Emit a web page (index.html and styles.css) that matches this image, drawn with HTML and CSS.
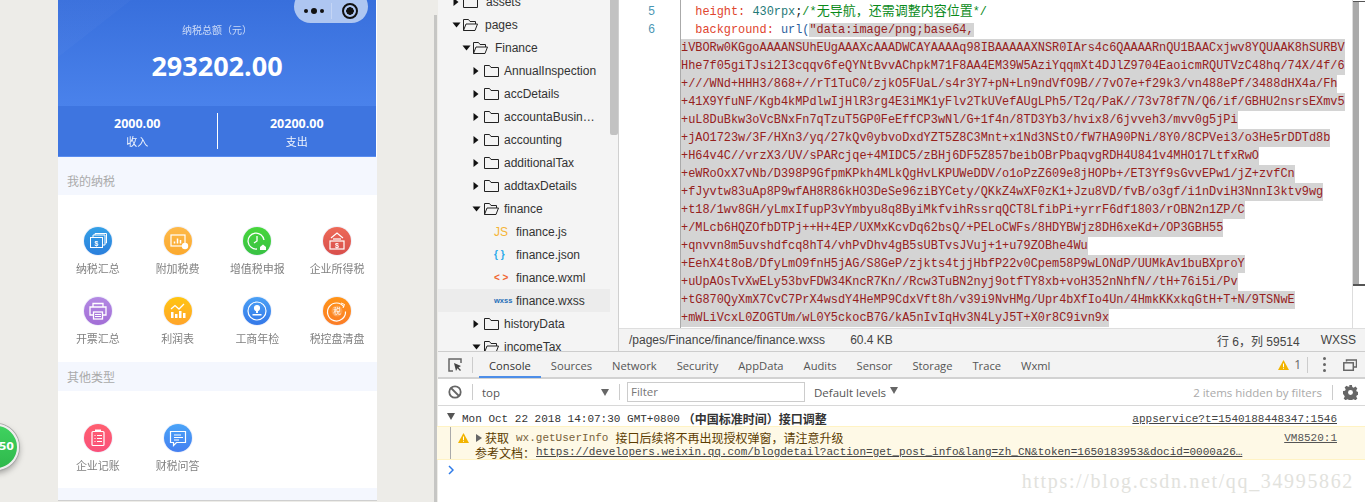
FILE: index.html
```html
<!DOCTYPE html>
<html lang="zh">
<head>
<meta charset="utf-8">
<title>finance.wxss</title>
<link rel="stylesheet" href="styles.css">
</head>
<body>
<svg class="sprite" aria-hidden="true">
  <symbol id="folder" viewBox="0 0 15 12"><path d="M.5 11.5V.5h5l1.5 2h7.5v9z" fill="none" stroke="#222"/></symbol>
  <symbol id="folder-open" viewBox="0 0 15 12"><path d="M.5 11.5V.5h5l1.5 2h5.5v2.5M.5 11.5l2.5-6.5h11.5l-2.5 6.5z" fill="none" stroke="#222"/></symbol>
  <symbol id="arrow-r" viewBox="0 0 8 10"><path d="M1.5 1l5 4-5 4z" fill="#111"/></symbol>
  <symbol id="arrow-d" viewBox="0 0 10 8"><path d="M.5 1.5h8l-4 5z" fill="#111"/></symbol>
  <symbol id="warn" viewBox="0 0 11 10"><path d="M5.5 0L11 10H0z" fill="#f2b400"/><path d="M5 3.5h1V7H5zM5 7.8h1v1H5z" fill="#fff"/></symbol>
</svg>
<div class="app">
  <section class="sim">
    <div class="phone">
      <div class="capsule">
        <span class="cap-dots"><i></i><i class="big"></i><i></i></span>
        <span class="cap-line"></span>
        <span class="cap-target"></span>
      </div>
      <header class="hero">
        <p class="hero-label">纳税总额（元）</p>
        <p class="hero-num">293202.00</p>
      </header>
      <div class="stats">
        <div class="stat"><b>2000.00</b><span>收入</span></div>
        <div class="stat stat-r"><b>20200.00</b><span>支出</span></div>
      </div>
      <h2 class="sec sec-a">我的纳税</h2>
      <div class="grid grid-a">
        <div class="cell"><span class="ico i1"><svg viewBox="0 0 28 28" fill="none" stroke="#fff" stroke-width="1"><rect x="6.5" y="10.5" width="12" height="10"/><path d="M9 10V8h12v10h-2M11 8V6.5h11.500v9.500h-1"/><text x="12.500" y="18.500" class="glyph" text-anchor="middle">$</text></svg></span><span class="lbl">纳税汇总</span></div>
        <div class="cell"><span class="ico i2"><svg viewBox="0 0 28 28" fill="none" stroke="#fff" stroke-width="1.200"><rect x="7" y="8" width="14" height="11"/><path d="M10.500 16.500v-2M13.500 16.500v-5M16.500 16.500v-3.500" stroke-width="1.500"/><circle cx="21" cy="19" r="3.200" fill="#fff" stroke="none"/></svg></span><span class="lbl">附加税费</span></div>
        <div class="cell"><span class="ico i3"><svg viewBox="0 0 28 28" fill="none" stroke="#fff" stroke-width="1.300"><path d="M21 13a8 8 0 1 0-7 9"/><path d="M14 9v5l-3 2"/><path d="M17 20l3-2.500 3 2.500v3h-6z" fill="#fff" stroke="none"/></svg></span><span class="lbl">增值税申报</span></div>
        <div class="cell"><span class="ico i4"><svg viewBox="0 0 28 28" fill="none" stroke="#fff" stroke-width="1.200"><path d="M8 11l6-5 6 5"/><path d="M10 12h8"/><rect x="7" y="14" width="14" height="8"/><text x="14" y="20.800" class="glyph" text-anchor="middle">$</text></svg></span><span class="lbl">企业所得税</span></div>
        <div class="cell"><span class="ico i5"><svg viewBox="0 0 28 28" fill="none" stroke="#fff" stroke-width="1.300"><path d="M9 10V6.500h10V10"/><path d="M9 18H6v-8h16v8h-3"/><rect x="9.500" y="15" width="9" height="7"/><path d="M11 17.500h6M11 19.500h6" stroke-width="1"/></svg></span><span class="lbl">开票汇总</span></div>
        <div class="cell"><span class="ico i6"><svg viewBox="0 0 28 28"><path d="M7 21v-6h2.500v6zM11 21v-4h2.500v4zM15 21v-7h2.500v7zM19 21v-5h2.500v5z" fill="#fff"/><path d="M7 12l4-3.500 4 3.500 5-5" fill="none" stroke="#fff" stroke-width="1.300"/></svg></span><span class="lbl">利润表</span></div>
        <div class="cell"><span class="ico i7"><svg viewBox="0 0 28 28" fill="none" stroke="#fff" stroke-width="1.200"><circle cx="14" cy="14" r="9"/><circle cx="14" cy="11" r="2.500" fill="#fff"/><path d="M13 13h2v3h-2zM9.500 17h9v1.500h-9z" fill="#fff" stroke="none"/></svg></span><span class="lbl">工商年检</span></div>
        <div class="cell"><span class="ico i8"><svg viewBox="0 0 28 28" fill="none" stroke="#fff" stroke-width="1.200"><path d="M21 10a9 9 0 1 0 1.500 4.500"/><path d="M18 6l3.500 1.500-1.500 3.500" stroke-width="1"/><circle cx="14" cy="14" r="5.500" stroke="none" fill="#ffffff30"/><text x="14" y="17" class="glyph-cjk" text-anchor="middle">税</text></svg></span><span class="lbl">税控盘清盘</span></div>
      </div>
      <h2 class="sec sec-b">其他类型</h2>
      <div class="grid grid-b">
        <div class="cell"><span class="ico i9"><svg viewBox="0 0 28 28" fill="none" stroke="#fff" stroke-width="1.200"><rect x="8" y="7.500" width="12" height="14" rx="1"/><path d="M11 6.500h6" stroke-width="2"/><path d="M10.500 11.500h1M13 11.500h5M10.500 14.500h1M13 14.500h5M10.500 17.500h1M13 17.500h5"/></svg></span><span class="lbl">企业记账</span></div>
        <div class="cell"><span class="ico i10"><svg viewBox="0 0 28 28" fill="none" stroke="#fff" stroke-width="1.200"><path d="M6.500 7.500h15v11h-9l-3 3v-3h-3z"/><path d="M10 11h7M10 13.500h9M10 16h5"/></svg></span><span class="lbl">财税问答</span></div>
      </div>
      <div class="phone-foot"></div>
    </div>
    <div class="sim-scroll"></div>
  </section>

  <main class="work">
    <div class="top">
      <nav class="tree">
        <div class="tree-scroll"></div>
        <div class="rows">
        <div class="row d1"><svg class="tw-r"><use href="#arrow-r"/></svg><svg class="fo"><use href="#folder"/></svg><span>assets</span></div>
        <div class="row d1"><svg class="tw-d"><use href="#arrow-d"/></svg><svg class="fo"><use href="#folder-open"/></svg><span>pages</span></div>
        <div class="row d2"><svg class="tw-d"><use href="#arrow-d"/></svg><svg class="fo"><use href="#folder-open"/></svg><span>Finance</span></div>
        <div class="row d3"><svg class="tw-r"><use href="#arrow-r"/></svg><svg class="fo"><use href="#folder"/></svg><span>AnnualInspection</span></div>
        <div class="row d3"><svg class="tw-r"><use href="#arrow-r"/></svg><svg class="fo"><use href="#folder"/></svg><span>accDetails</span></div>
        <div class="row d3"><svg class="tw-r"><use href="#arrow-r"/></svg><svg class="fo"><use href="#folder"/></svg><span>accountaBusin…</span></div>
        <div class="row d3"><svg class="tw-r"><use href="#arrow-r"/></svg><svg class="fo"><use href="#folder"/></svg><span>accounting</span></div>
        <div class="row d3"><svg class="tw-r"><use href="#arrow-r"/></svg><svg class="fo"><use href="#folder"/></svg><span>additionalTax</span></div>
        <div class="row d3"><svg class="tw-r"><use href="#arrow-r"/></svg><svg class="fo"><use href="#folder"/></svg><span>addtaxDetails</span></div>
        <div class="row d3"><svg class="tw-d"><use href="#arrow-d"/></svg><svg class="fo"><use href="#folder-open"/></svg><span>finance</span></div>
        <div class="row file"><span class="ft js">JS</span><span>finance.js</span></div>
        <div class="row file"><span class="ft json">{ }</span><span>finance.json</span></div>
        <div class="row file"><span class="ft wxml">&lt; &gt;</span><span>finance.wxml</span></div>
        <div class="row file active"><span class="ft wxss">wxss</span><span>finance.wxss</span></div>
        <div class="row d3"><svg class="tw-r"><use href="#arrow-r"/></svg><svg class="fo"><use href="#folder"/></svg><span>historyData</span></div>
        <div class="row d3"><svg class="tw-d"><use href="#arrow-d"/></svg><svg class="fo"><use href="#folder-open"/></svg><span>incomeTax</span></div>
        </div>
      </nav>
      <div class="edit-col">
        <div class="editor">
          <div class="gutter"><div>5</div><div>6</div></div>
          <pre class="code"><div>  <span class="k">height</span><span class="k">:</span> <span class="n">430rpx</span>;<span class="c">/*<span class="c-cjk">无导航，还需调整内容位置</span>*/</span></div><div>  <span class="k">background</span><span class="k">:</span> <span class="u">url(</span><span class="s">"data:image/png;base64,</span></div><div class="sel">iVBORw0KGgoAAAANSUhEUgAAAXcAAADWCAYAAAAq98IBAAAAAXNSR0IArs4c6QAAAARnQU1BAACxjwv8YQUAAK8hSURBV</div><div class="sel">Hhe7f05giTJsi2I3cqqv6feQYNtBvvAChpkM71F8AA4EM39W5AziYqqmXt4DJlZ9704EaoicmRQUTVzC48hq/74X/4f/6</div><div class="sel">+///WNd+HHH3/868+//rT1TuC0/zjkO5FUaL/s4r3Y7+pN+Ln9ndVfO9B//7vO7e+f29k3/vn488ePf/3488dHX4a/Fh</div><div class="sel">+41X9YfuNF/Kgb4kMPdlwIjHlR3rg4E3iMK1yFlv2TkUVefAUgLPh5/T2q/PaK//73v78f7N/Q6/if/GBHU2nsrsEXmv5</div><div class="sel">+uL8DuBkw3oVcBNxFn7qTzuT5GP0FeEffCP3wNl/G+1f4n/8TD3Yb3/hvix8/6jvveh3/mvv0g5jPi</div><div class="sel">+jAO1723w/3F/HXn3/yq/27kQv0ybvoDxdYZT5Z8C3Mnt+x1Nd3NStO/fW7HA90PNi/8Y0/8CPVei3/o3He5rDDTd8b</div><div class="sel">+H64v4C//vrzX3/UV/sPARcjqe+4MIDC5/zBHj6DF5Z857beibOBrPbaqvgRDH4U841v4MHO17LtfxRwO</div><div class="sel">+eWRoOxX7vNb/D398P9GfpmKPkh4MLkQgHvLKPUWeDDV/o1oPzZ609e8jHOPb+/ET3Yf9sGvvEPw1/jZ+zvfCn</div><div class="sel">+fJyvtw83uAp8P9wfAH8R86kHO3DeSe96ziBYCety/QKkZ4wXF0zK1+Jzu8VD/fvB/o3gf/i1nDviH3NnnI3ktv9wg</div><div class="sel">+t18/1wv8GH/yLmxIfupP3vYmbyu8q8ByiMkfvihRssrqQCT8LfibPi+yrrF6df1803/rOBN2n1ZP/C</div><div class="sel">+/MLcb6HQZOfbDTPj++H+4EP/UXMxKcvDq62bsQ/+PELoCWFs/8HDYBWjz8DH6xeKd+/OP3GBH55</div><div class="sel">+qnvvn8m5uvshdfcq8hT4/vhPvDhv4gB5sUBTvsJVuj+1+u79ZOBhe4Wu</div><div class="sel">+EehX4t8oB/DfyLmO9fnH5jAG/S8GeP/zjkts4tjjHbfP22v0Cpem58P9wLONdP/UUMkAv1buBXproY</div><div class="sel">+uUpAOsTvXwELy53bvFDW34KncR7Kn//Rcw3TuBN2nyj9otfTY8xb+voH352nNhfN//tH+76i5i/Pv</div><div class="sel">+tG870QyXmX7CvC7PrX4wsdY4HeMP9CdxVft8h/v39i9NvHMg/Upr4bXfIo4Un/4HmkKKxkqGtH+T+N/9TSNwE</div><div class="sel">+mWLiVcxL0ZOGTUm/wL0Y5ckocB7G/kA5nIvIqHv3N4LyJ5T+X0r8C9ivn9x</div></pre>
          <div class="vscroll"><div class="thumb"></div></div>
        </div>
        <div class="status">
          <span class="path">/pages/Finance/finance/finance.wxss</span>
          <span class="size">60.4 KB</span>
          <span class="pos">行 6，列 59514</span>
          <span class="lang">WXSS</span>
        </div>
      </div>
    </div>

    <div class="dev">
      <div class="tabs">
        <svg class="t-inspect" viewBox="0 0 14 14"><path d="M5 13H1V1h12v4" fill="none" stroke="#666" stroke-width="1.500"/><path d="M6 5l2 8 1.500-2.800L12 13l1-1-2.500-2.500L13 8z" fill="#444"/></svg>
        <span class="vsep"></span>
        <span class="tab on">Console</span><span class="tab">Sources</span><span class="tab">Network</span><span class="tab">Security</span><span class="tab">AppData</span><span class="tab">Audits</span><span class="tab">Sensor</span><span class="tab">Storage</span><span class="tab">Trace</span><span class="tab">Wxml</span>
        <span class="tab-right">
          <svg class="w11"><use href="#warn"/></svg><span class="cnt">1</span><span class="vsep sep2"></span>
          <span class="kebab"><i></i><i></i><i></i></span>
          <svg class="dock" viewBox="0 0 14 12"><path d="M3.500 2.500V1h10v7h-3" fill="none" stroke="#666" stroke-width="1.500"/><rect x=".8" y="3.800" width="9.500" height="7.500" fill="none" stroke="#666" stroke-width="1.500"/></svg>
        </span>
      </div>
      <div class="bar">
        <svg class="t-block" viewBox="0 0 14 14"><circle cx="7" cy="7" r="5.700" fill="none" stroke="#666" stroke-width="1.800"/><path d="M3 3l8 8" stroke="#666" stroke-width="1.800"/></svg>
        <span class="vsep"></span>
        <span class="ctx">top</span>
        <span class="caret"></span>
        <span class="vsep vsep-b"></span>
        <span class="filter">Filter</span>
        <span class="levels">Default levels</span>
        <span class="caret caret-l"></span>
        <span class="hidden-n">2 items hidden by filters</span>
        <span class="vsep sep3"></span>
        <svg class="gear" viewBox="0 0 16 16"><path d="M6.500 0h3l.4 2.200 1.500.7 1.900-1.200 2 2-1.200 1.900.7 1.500 2.200.4v3l-2.200.4-.7 1.500 1.200 1.900-2 2-1.900-1.200-1.500.7-.4 2.200h-3l-.4-2.200-1.500-.7-1.900 1.200-2-2 1.200-1.900-.7-1.500L0 9.500v-3l2.200-.4.700-1.500-1.200-1.900 2-2 1.900 1.200 1.500-.7z" fill="#666"/><circle cx="8" cy="8" r="2.600" fill="#fff"/></svg>
      </div>
      <div class="log">
        <div class="group">
          <span class="g-left"><span class="tri"></span><span class="mono">Mon Oct 22 2018 14:07:30 GMT+0800</span><b class="g-cjk">（中国标准时间）接口调整</b></span>
          <a class="src">appservice?t=1540188448347:1546</a>
        </div>
        <div class="warnbox">
          <div class="warn-in">
            <div class="w-line">
              <svg class="w11"><use href="#warn"/></svg>
              <span class="tri-r"></span>
              <span class="w-cjk">获取</span><span class="mono w-mono">wx.getUserInfo</span><span class="w-cjk">接口后续将不再出现授权弹窗，请注意升级</span>
              <a class="src w-src">VM8520:1</a>
            </div>
            <div class="w-line w-l2">
              <span class="w-cjk">参考文档：</span><a class="mono w-link">https://developers.weixin.qq.com/blogdetail?action=get_post_info&amp;lang=zh_CN&amp;token=1650183953&amp;docid=0000a26…</a>
            </div>
          </div>
        </div>
        <svg class="prompt" viewBox="0 0 6 10"><path d="M1 1l4 4-4 4" fill="none" stroke="#2f7be8" stroke-width="1.500"/></svg>
      </div>
    </div>
  </main>
  <div class="badge">50</div>
  <div class="mark">https://blog.csdn.net/qq_34995862</div>
</div>
</body>
</html>
```

FILE: styles.css
```css
* { box-sizing: border-box; }
html, body { margin: 0; padding: 0; height: 502px; overflow: hidden; background: #fff; }
body { font-family: "Liberation Sans", "Noto Sans CJK SC", sans-serif; }
p, h2 { margin: 0; font-weight: 400; }
i { font-style: normal; }
.sprite { position: absolute; width: 0; height: 0; }
.app { position: relative; display: flex; width: 1365px; height: 502px; overflow: hidden; }

/* simulator */
.sim { position: relative; width: 438px; height: 502px; background: #edece8; padding: 0 1px 0 58px; display: flex; justify-content: space-between; flex: none; }
.sim-scroll { width: 3px; margin-top: 15px; background: #c6c6c4; }
.phone { position: relative; width: 319px; height: 501px; background: #fff; border-bottom: 1px solid #cfcfcf; font-family: "Noto Sans CJK SC", sans-serif; }
.capsule { position: absolute; left: 236px; top: -10px; width: 74px; height: 33px; border-radius: 17px; background: #aec6f1; display: flex; align-items: center; padding-top: 9px; }
.cap-dots { display: flex; align-items: center; gap: 3px; margin-left: 10px; width: 22px; }
.cap-dots i { width: 4px; height: 4px; border-radius: 50%; background: #111; }
.cap-dots i.big { width: 6px; height: 6px; }
.cap-line { width: 1px; height: 16px; background: #c4d5f5; margin-left: 5px; }
.cap-target { width: 16px; height: 16px; border: 2px solid #111; border-radius: 50%; margin-left: 10px; background: radial-gradient(circle, #111 0 3.500px, transparent 4px); }
.hero { height: 106px; padding-top: 22px; text-align: center; background: linear-gradient(142deg, rgba(255,255,255,.025) 0 16%, transparent 16.200%), linear-gradient(180deg, #386fdc, #4a82eb); color: #fff; width: 318px; }
.hero-label { font-size: 10px; line-height: 16px; opacity: .72; }
.hero-num { font: 700 27px/36px "Open Sans", sans-serif; margin-top: 10px; }
.stats { display: flex; width: 318px; height: 51px; background: #3e75e0; border-bottom: 1px solid #5a8df0; color: #fff; padding-top: 7px; }
.stat { flex: 1; display: flex; flex-direction: column; align-items: center; height: 36px; padding-top: 2px; }
.stat-r { border-left: 1px solid #fff; }
.stat b { font: 700 12.500px/18px "Open Sans", sans-serif; }
.stat span { font-size: 11px; line-height: 16px; opacity: .92; }
.sec { background: #f4f7fe; color: #aaa; font-size: 12px; padding-left: 9px; }
.sec-a { height: 38px; padding-top: 16px; line-height: 16px; }
.sec-b { height: 29px; padding-top: 7px; line-height: 16px; }
.grid { display: grid; grid-template-columns: repeat(4, 79.750px); }
.grid-a { row-gap: 21px; padding: 32px 0 16px; }
.grid-b { padding: 33px 0 15px; }
.cell { display: flex; flex-direction: column; align-items: center; height: 49px; filter: blur(.35px); }
.ico { width: 28px; height: 28px; border-radius: 50%; display: block; flex: none; box-shadow: 0 0 0 1px rgba(130,150,220,.12); }
.ico svg { display: block; width: 28px; height: 28px; }
.lbl { margin-top: 5px; font-size: 11px; line-height: 16px; color: #808080; white-space: nowrap; }
.glyph { font: 700 7px "Liberation Sans", sans-serif; fill: #fff; stroke: none; }
.glyph-cjk { font: 7.500px "Noto Sans CJK SC", sans-serif; fill: #fff; stroke: none; }
.i1 { background: linear-gradient(#34a0e6, #2a7fdc); }
.i2 { background: linear-gradient(#fdb94a, #fba92e); }
.i3 { background: linear-gradient(#48d63c, #38c144); }
.i4 { background: linear-gradient(#ed6a58, #d84f4c); }
.i5 { background: linear-gradient(#b389e3, #a26ed6); }
.i6 { background: linear-gradient(#ffc512, #ffa42a); }
.i7 { background: linear-gradient(#4aa0f5, #3478e8); }
.i8 { background: linear-gradient(#ff9418, #fb7d28); }
.i9 { background: linear-gradient(#ff5f70, #f9507a); }
.i10 { background: linear-gradient(#4aa4f8, #457ff0); }
.phone-foot { height: 12px; background: #f4f7fe; }
.badge { position: absolute; left: -27px; top: 424px; width: 46px; height: 46px; border-radius: 50%; background: linear-gradient(#3fd25f, #2fb84c); border: 2px solid #eee; box-shadow: 0 0 0 1px #aaa, 0 3px 6px rgba(0,0,0,.35); color: #fff; font: 700 11px/42px "DejaVu Sans", sans-serif; text-align: right; padding-right: 3px; }

/* workspace */
.work { flex: 1; min-width: 0; display: flex; flex-direction: column; }
.top { display: flex; height: 352px; border-bottom: 1px solid #cdcdcd; flex: none; }
.tree { position: relative; width: 181px; flex: none; overflow: hidden; background: #f4f4f4; border-right: 1px solid #d0d0d0; font-size: 12px; color: #333; }
.tree-scroll { position: absolute; z-index: 1; right: 0; top: 0; width: 8px; height: 135px; background: #c2c2c2; border-radius: 0 0 2px 2px; }
.rows { margin-top: -10px; }
.row { display: flex; align-items: center; height: 23px; white-space: nowrap; width: 172px; }
.row svg { flex: none; }
.tw-r { width: 8px; height: 10px; }
.tw-d { width: 10px; height: 8px; }
.fo { width: 15px; height: 12px; }
.d1 { padding-left: 14px; }
.d1 .tw-r { margin-right: 3px; }
.d1 .tw-d { margin-right: 1px; }
.d1 .fo { margin-right: 7px; }
.d1 .tw-r + .fo { margin-right: 8px; }
.d2 { padding-left: 24px; }
.d2 .tw-d { margin-right: 1px; }
.d2 .fo { margin-right: 7px; }
.d3 { padding-left: 34px; }
.d3 .tw-r { margin-right: 4px; }
.d3 .tw-d { margin-right: 2px; }
.d3 .fo { margin-right: 5px; }
.file { padding-left: 56px; }
.file.active { background: #ececec; }
.ft { width: 22px; flex: none; font-size: 11px; font-weight: 700; }
.js { color: #f5b437; font-family: "Liberation Sans", sans-serif; font-weight: 400; font-size: 12px; }
.json { color: #29a9ea; font-size: 10px; }
.wxml { color: #f0652f; font-size: 10px; }
.wxss { color: #1f6fb8; font-size: 7.500px; }
.edit-col { flex: 1; min-width: 0; display: flex; flex-direction: column; }
.editor { display: flex; height: 328px; overflow: hidden; background: #fff; flex: none; }
.gutter { width: 62px; flex: none; padding: 3px 0 0 29px; font: 11.900px/18px "Liberation Mono", monospace; color: #4a96b4; }
.code { flex: 1; min-width: 0; margin: 0; padding: 3px 0 0 0; box-shadow: -1px 0 0 #aaa; font: 11.900px/18px "Liberation Mono", "Noto Sans CJK SC", monospace; color: #222; overflow: hidden; }
.k { color: #e0452f; }
.n { color: #1f7a78; }
.c { color: #0a8a1a; }
.c-cjk { font-size: 13px; line-height: 1; }
.u { color: #2c5f9e; }
.s { color: #96201c; background: #d4d4d4; }
.sel { color: #96201c; background: #d4d4d4; width: fit-content; }
.vscroll { width: 13px; flex: none; border-left: 1px solid #ddd; padding-top: 1px; }
.thumb { height: 285px; background: linear-gradient(90deg, #aaa 0 6px, transparent 6px); border-top: 1px solid #555; border-bottom: 2px solid #555; }
.status { flex: 1; display: flex; align-items: center; background: #f3f3f3; border-top: 1px solid #dedede; font-size: 12px; color: #444; padding: 0 9px 0 10px; }
.size { margin-left: 25px; }
.pos { margin-left: auto; }
.lang { margin-left: 21px; }

/* devtools */
.dev { flex: 1; min-height: 0; display: flex; flex-direction: column; border-left: 1px solid #ccc; margin-left: -2px; background: #fff; }
.tabs { display: flex; align-items: center; height: 27px; flex: none; background: #f3f3f3; border-bottom: 2px solid #d2d2d2; font-family: "Open Sans", sans-serif; padding-left: 11px; }
.t-inspect, .t-block { width: 14px; height: 14px; flex: none; }
.vsep { width: 1px; height: 16px; background: #ccc; margin: 0 6px 0 10px; flex: none; }
.tab { position: relative; padding: 0 10px; height: 25px; line-height: 27px; font-size: 11.200px; color: #555; white-space: nowrap; flex: none; }
.tab.on { color: #333; }
.tab.on::after { content: ""; position: absolute; left: 0; right: 0; bottom: -1px; height: 2px; background: #4d8ee8; }
.tab-right { margin-left: auto; display: flex; align-items: center; padding-right: 8px; }
.w11 { width: 11px; height: 10px; flex: none; }
.cnt { font-size: 12px; color: #666; margin-left: 5px; }
.sep2 { margin: 0 15px 0 6px; }
.kebab { display: flex; flex-direction: column; gap: 3px; margin-right: 17px; }
.kebab i { width: 3px; height: 3px; background: #666; border-radius: 50%; }
.dock { width: 14px; height: 12px; }
.bar { display: flex; align-items: center; height: 27px; flex: none; border-bottom: 1px solid #d8d8d8; font-family: "Open Sans", sans-serif; font-size: 11.500px; color: #555; padding-left: 11px; padding-right: 7px; }
.ctx { width: 119px; margin-left: 3px; }
.caret { width: 0; height: 0; border-left: 4px solid transparent; border-right: 4px solid transparent; border-top: 7px solid #666; flex: none; }
.vsep-b { margin: 0 7px 0 10px; }
.filter { width: 178px; height: 20px; border: 1px solid #ccc; line-height: 18px; padding-left: 3px; color: #777; flex: none; }
.levels { margin-left: 9px; }
.caret-l { margin-left: 4px; margin-top: -3px; }
.hidden-n { margin-left: auto; color: #aaa; }
.sep3 { margin: 0 10px 0 10px; height: 15px; }
.gear { width: 15px; height: 15px; flex: none; }
.log { flex: 1; min-height: 0; position: relative; }
.mono { font-family: "Liberation Mono", monospace; font-size: 11px; }
.group { display: flex; align-items: center; justify-content: space-between; height: 20px; padding: 5px 28px 0 10px; font-size: 11px; color: #333; }
.g-left { display: flex; align-items: center; }
.tri { width: 0; height: 0; border-left: 4px solid transparent; border-right: 4px solid transparent; border-top: 7px solid #555; margin-right: 7px; margin-top: -4px; }
.g-cjk { font: 700 12px "Noto Sans CJK SC", sans-serif; margin-left: 3px; }
.src { font: 11px "Liberation Mono", monospace; color: #444; text-decoration: underline; }
.warnbox { height: 34px; background: #fef9e6; border-top: 1px solid #fff3c4; border-bottom: 1px solid #fff3c4; padding-left: 13px; }
.warn-in { height: 32px; border-left: 1px solid #aaa; padding: 3px 28px 0 7px; color: #5c3c00; font-size: 12px; }
.w-line { display: flex; align-items: center; height: 15px; white-space: nowrap; }
.w-l2 { height: 14px; padding-left: 17px; }
.tri-r { width: 0; height: 0; border-top: 4px solid transparent; border-bottom: 4px solid transparent; border-left: 6px solid #666; margin: 0 3px 0 7px; }
.w-cjk { font-family: "Noto Sans CJK SC", sans-serif; font-size: 12px; line-height: 15px; }
.w-mono { color: #77613a; margin: 0 7px; }
.w-src { margin-left: auto; color: #555; }
.w-link { color: #444; text-decoration: underline; margin-left: 1px; }
.prompt { display: block; width: 6px; height: 10px; margin: 5px 0 0 11px; }
.mark { position: absolute; right: 11px; top: 470px; color: #e2e2dd; font: 20px/22px "Liberation Serif", serif; letter-spacing: 1.650px; white-space: nowrap; }
```
